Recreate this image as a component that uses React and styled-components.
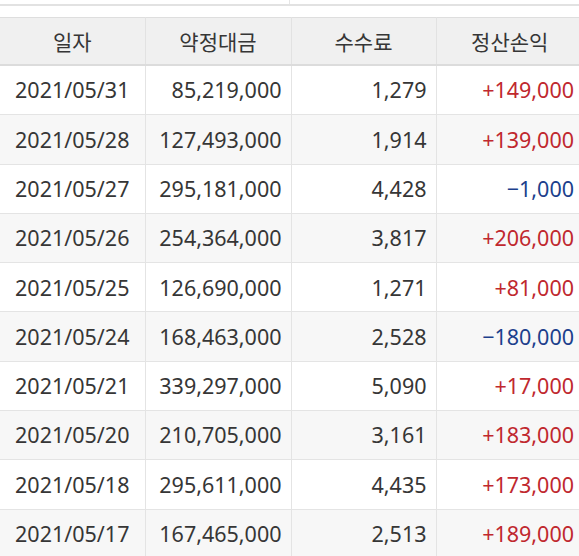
import React from "react";
import styled, { createGlobalStyle } from "styled-components";

const rows = [
  ["2021/05/31", "85,219,000", "1,279", "+149,000"],
  ["2021/05/28", "127,493,000", "1,914", "+139,000"],
  ["2021/05/27", "295,181,000", "4,428", "\u22121,000"],
  ["2021/05/26", "254,364,000", "3,817", "+206,000"],
  ["2021/05/25", "126,690,000", "1,271", "+81,000"],
  ["2021/05/24", "168,463,000", "2,528", "\u2212180,000"],
  ["2021/05/21", "339,297,000", "5,090", "+17,000"],
  ["2021/05/20", "210,705,000", "3,161", "+183,000"],
  ["2021/05/18", "295,611,000", "4,435", "+173,000"],
  ["2021/05/17", "167,465,000", "2,513", "+189,000"],
];

function App() {
  return (
    <Page>
      <GlobalStyle />
      <TopStrip>
        <TopCell />
        <TopCell />
      </TopStrip>
      <Table>
        <colgroup>
          <col style={{ width: 145 }} />
          <col style={{ width: 146 }} />
          <col style={{ width: 145 }} />
          <col style={{ width: 147 }} />
        </colgroup>
        <thead>
          <tr>
            <Th>일자</Th>
            <Th>약정대금</Th>
            <Th>수수료</Th>
            <Th>정산손익</Th>
          </tr>
        </thead>
        <tbody>
          {rows.map((r, i) => (
            <Row key={r[0]} $striped={i % 2 === 1}>
              <Td $align="center">{r[0]}</Td>
              <Td>{r[1]}</Td>
              <Td>{r[2]}</Td>
              <Td $tone={r[3].startsWith("+") ? "up" : "down"}>{r[3]}</Td>
            </Row>
          ))}
        </tbody>
      </Table>
    </Page>
  );
}

export default App;

const GlobalStyle = createGlobalStyle`
  html, body {
    margin: 0;
    padding: 0;
    background: #fff;
    overflow: hidden;
  }
`;

const Page = styled.div`
  width: 579px;
  height: 556px;
  overflow: hidden;
  font-family: "Noto Sans", "Noto Sans CJK KR", sans-serif;
  color: #363636;
`;

const TopStrip = styled.div`
  display: flex;
  height: 4px;
  border-bottom: 2px solid #e2e2e2;
  margin-bottom: 11px;
`;

const TopCell = styled.div`
  width: 290px;
  & + & {
    border-left: 1px solid #e6e6e6;
  }
`;

const Table = styled.table`
  width: 583px;
  table-layout: fixed;
  border-collapse: collapse;
  border-top: 1px solid #dedede;
`;

const Th = styled.th`
  height: 46px;
  padding: 0;
  background: #f0f0f0;
  border-bottom: 2px solid #dcdcdc;
  border-left: 1px solid #e2e2e2;
  font-size: 21px;
  font-weight: 400;
  color: #363636;
  text-align: center;
  &:first-child {
    border-left: none;
  }
`;

const Row = styled.tr`
  background: ${(p) => (p.$striped ? "#f7f7f7" : "#fff")};
`;

const Td = styled.td`
  height: 48.3px;
  padding: 0 9px 0 0;
  border-bottom: 1px solid #e4e4e4;
  border-left: 1px solid #e4e4e4;
  font-size: 21.5px;
  line-height: 1;
  text-align: ${(p) => p.$align || "right"};
  color: ${(p) =>
    p.$tone === "up" ? "#c0282e" : p.$tone === "down" ? "#1c3f8c" : "#363636"};
  white-space: nowrap;
  &:first-child {
    border-left: none;
    padding: 0;
  }
`;
